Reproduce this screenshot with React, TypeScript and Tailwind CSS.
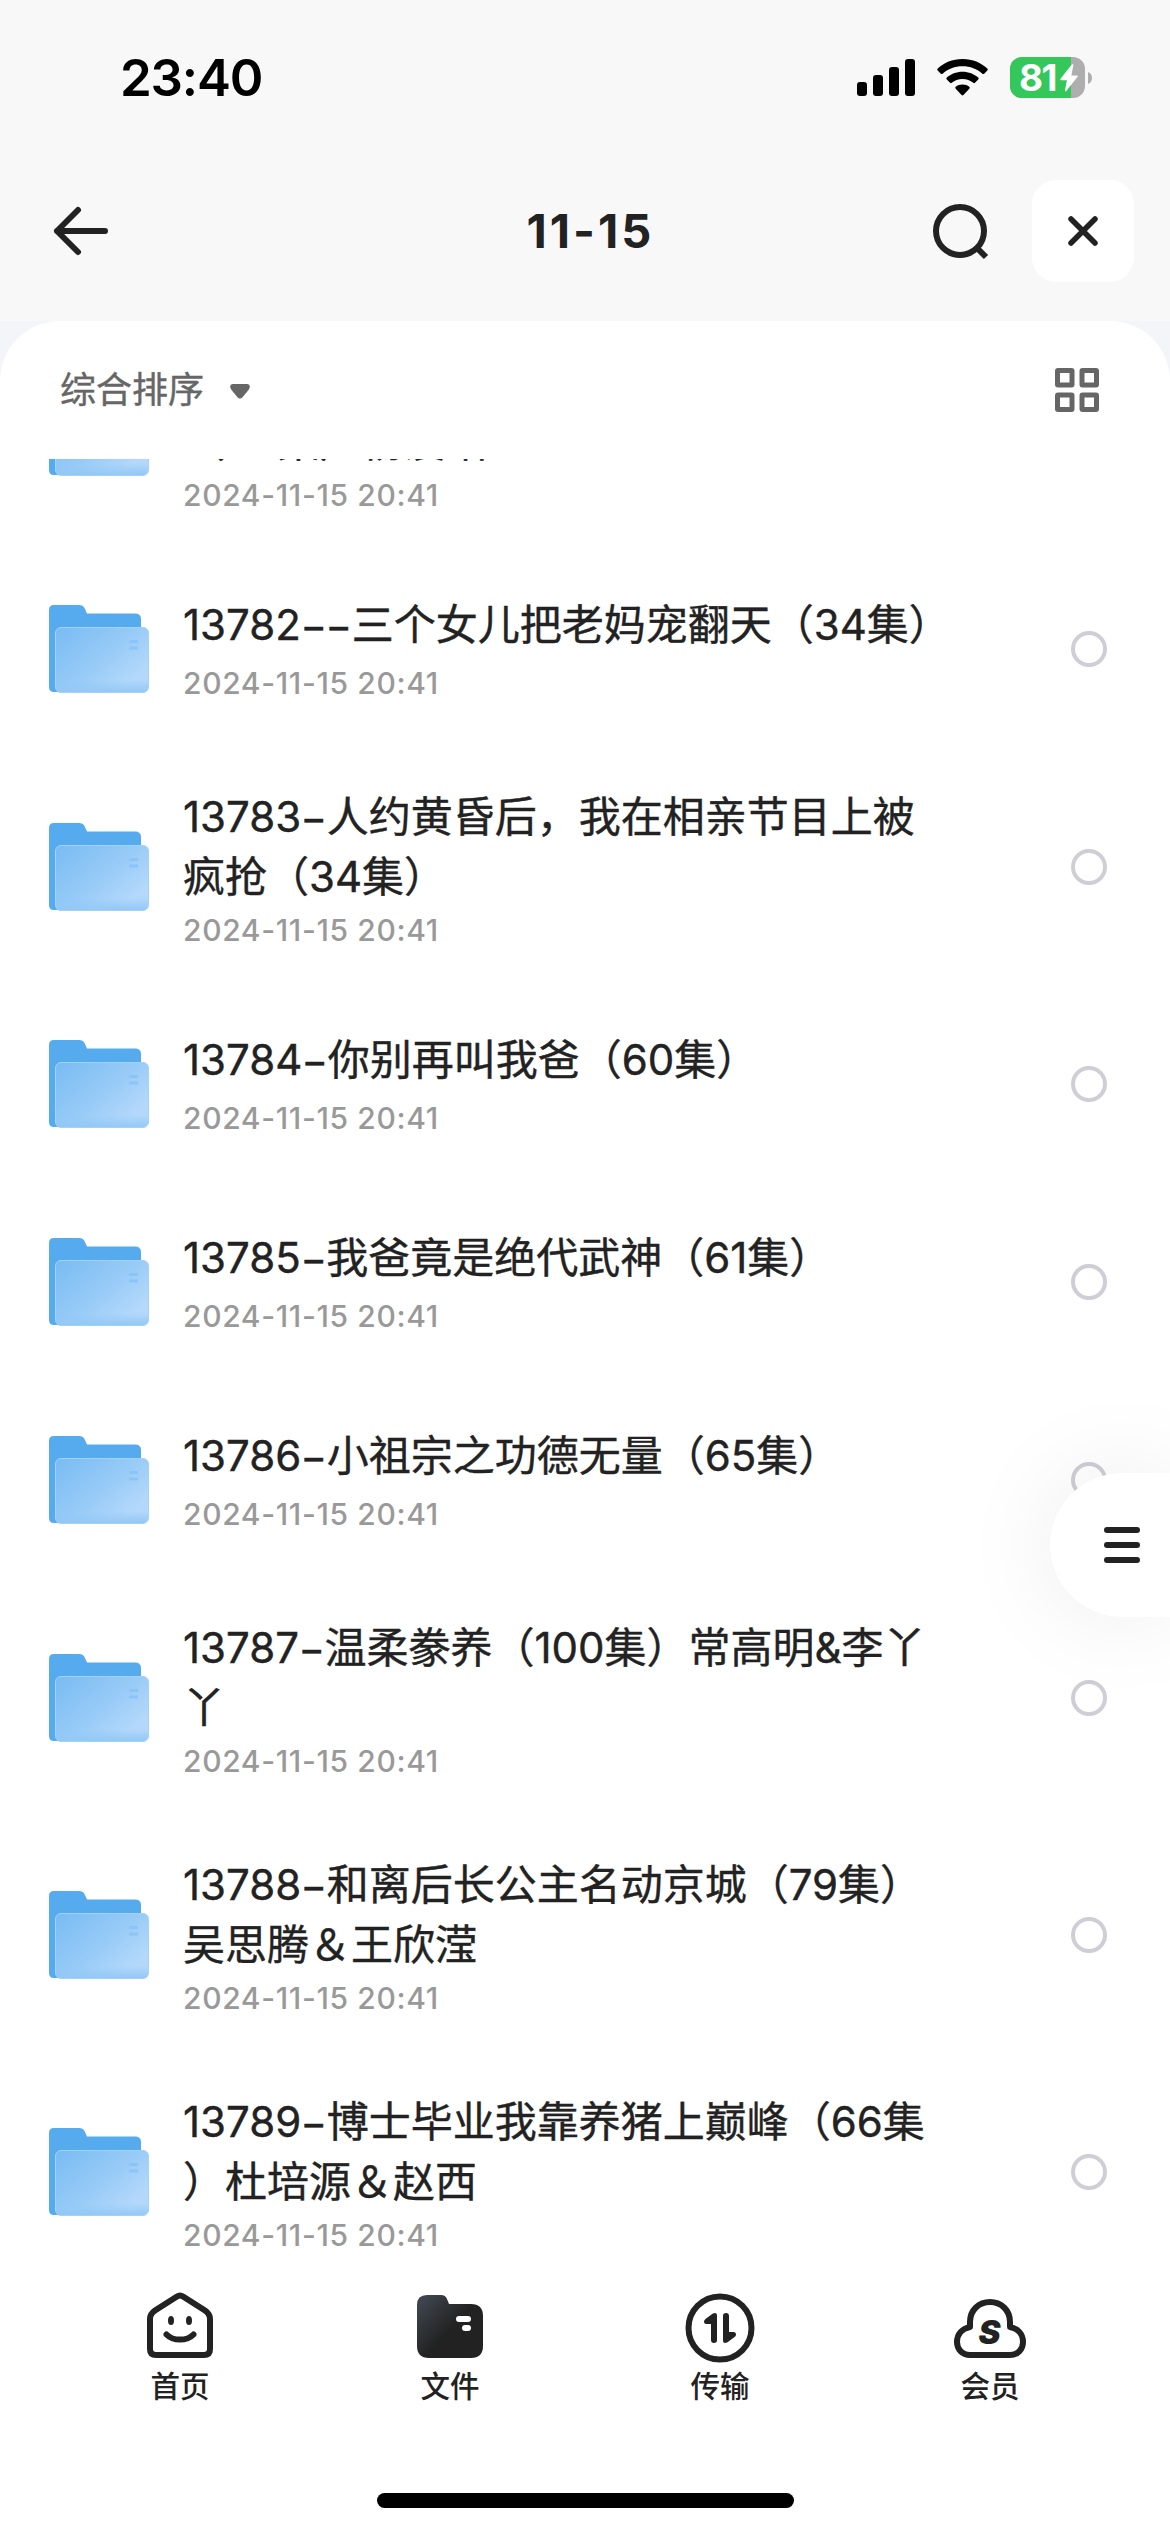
import type { ReactNode } from "react";

type FolderItem = {
  lines: string[];
  date: string;
};

const DATE = "2024-11-15 20:41";

const folders: FolderItem[] = [
  { lines: ["", "（60集）杨浚皓"], date: DATE },
  { lines: ["13782––三个女儿把老妈宠翻天（34集）"], date: DATE },
  { lines: ["13783–人约黄昏后，我在相亲节目上被", "疯抢（34集）"], date: DATE },
  { lines: ["13784–你别再叫我爸（60集）"], date: DATE },
  { lines: ["13785–我爸竟是绝代武神（61集）"], date: DATE },
  { lines: ["13786–小祖宗之功德无量（65集）"], date: DATE },
  { lines: ["13787–温柔豢养（100集）常高明&李丫", "丫"], date: DATE },
  { lines: ["13788–和离后长公主名动京城（79集）", "吴思腾＆王欣滢"], date: DATE },
  { lines: ["13789–博士毕业我靠养猪上巅峰（66集", "）杜培源＆赵西"], date: DATE },
];

function StatusBar() {
  return (
    <div className="flex h-[156px] items-start justify-between pl-[120px] pr-[78px]">
      <span className="mt-[48px] text-[51px] leading-[60px] font-semibold tracking-[-1.2px] text-black">23:40</span>
      <div className="mt-[57px] flex h-[41px] items-center">
        <svg width="58" height="37" viewBox="0 0 58 37" className="mr-[22px]">
          <rect x="0" y="23" width="10" height="14" rx="3" />
          <rect x="16" y="16" width="10" height="21" rx="3" />
          <rect x="32" y="8" width="10" height="29" rx="3" />
          <rect x="48" y="0" width="10" height="37" rx="3" />
        </svg>
        <svg width="51" height="37" viewBox="0 0 51 37" className="mr-[22px]">
          <path d="M25.500 0C35.600 0 44.300 3.800 50.300 9.600Q51.200 10.600 50.300 11.500L47.200 14.700Q46.300 15.500 45.400 14.700C40.100 9.800 33.200 7.200 25.500 7.200S10.900 9.800 5.600 14.700Q4.700 15.500 3.800 14.700L.7 11.500Q-.2 10.600.7 9.600C6.700 3.800 15.400 0 25.500 0Z" />
          <path d="M25.500 12.800C31.700 12.800 37.200 15 41.200 18.600Q42.200 19.600 41.200 20.600L38 23.800Q37.200 24.600 36.200 23.800C33.400 21.400 29.700 19.900 25.500 19.900S17.600 21.400 14.800 23.800Q13.800 24.600 13 23.800L9.800 20.600Q8.800 19.600 9.800 18.600C13.800 15 19.300 12.800 25.500 12.800Z" />
          <path d="M25.500 25.500C28.200 25.500 30.500 26.400 32.300 27.800Q33.300 28.800 32.300 29.800L26.400 36.100Q25.500 37 24.600 36.100L18.700 29.800Q17.700 28.800 18.700 27.800C20.500 26.400 22.800 25.500 25.500 25.500Z" />
        </svg>
        <div className="relative flex h-[41px] w-[75px] items-center rounded-[12px] bg-[#aeaeae]">
          <div className="absolute inset-y-0 left-0 w-[61px] rounded-l-[12px] bg-[#34c759]" />
          <span className="relative ml-[9px] text-[37px] leading-[41px] font-bold tracking-[-1.500px] text-white">81</span>
          <svg width="18" height="28" viewBox="0 0 18 28" className="absolute left-[50px] top-[7px]" fill="#fff">
            <path d="M11.800.6Q13.600-.5 13.300 1.300L11.400 11.400H16.800Q18.400 11.600 17.400 13L6.300 26.900Q4.700 28.100 5 26.200L6.900 16.200H1.300Q-.3 15.900.7 14.500Z" />
          </svg>
        </div>
        <svg width="4" height="12" viewBox="0 0 4 12" className="ml-[3px]">
          <path d="M0 0Q4 1.500 4 6T0 12Z" fill="#aeaeae" />
        </svg>
      </div>
    </div>
  );
}

function Header() {
  return (
    <header className="grid h-[165px] grid-cols-[1fr_auto_1fr] items-start">
      <svg width="56" height="50" viewBox="0 0 56 50" className="ml-[53px] mt-[50px]" fill="none" stroke="#222" strokeWidth="6" strokeLinecap="round" strokeLinejoin="round">
        <path d="M25 4L4 25L25 46M4 25H52" />
      </svg>
      <h1 className="mt-[45px] ml-[11px] text-[47px] leading-[60px] font-bold tracking-[3px] text-[#222]">11-15</h1>
      <div className="flex justify-end pr-[36px]">
        <svg width="58" height="58" viewBox="0 0 58 58" className="mr-[42px] mt-[47px]" fill="none" stroke="#222" strokeWidth="6">
          <circle cx="28" cy="28" r="24" />
          <path d="M44.500 44.500L54 54" />
        </svg>
        <button className="mt-[24px] flex h-[102px] w-[102px] items-center justify-center rounded-[24px] bg-white">
          <svg width="30" height="30" viewBox="0 0 30 30" stroke="#222" strokeWidth="5.500" strokeLinecap="round">
            <path d="M3 3L27 27M27 3L3 27" />
          </svg>
        </button>
      </div>
    </header>
  );
}

function SortBar() {
  return (
    <div className="flex h-[138px] shrink-0 items-center justify-between pl-[60px] pr-[71px]">
      <div className="flex items-center gap-[26px]">
        <span className="text-[36px] leading-[50px] text-[#666] [-webkit-text-stroke:0.4px_#666]">综合排序</span>
        <svg width="20" height="15" viewBox="0 0 20 15" className="mt-[2px]">
          <path d="M2.500 0H17.500Q20 .3 19.800 3Q19.600 4.600 18.500 6L12.300 13.600Q10 15.800 7.700 13.600L1.500 6Q.4 4.600.2 3Q0 .3 2.500 0Z" fill="#666" />
        </svg>
      </div>
      <svg width="44" height="44" viewBox="0 0 44 44" fill="none" stroke="#666" strokeWidth="5">
        <rect x="2.500" y="2.500" width="14.500" height="14.500" rx="0.500" />
        <rect x="27" y="2.500" width="14.500" height="14.500" rx="0.500" />
        <rect x="2.500" y="27" width="14.500" height="14.500" rx="0.500" />
        <rect x="27" y="27" width="14.500" height="14.500" rx="0.500" />
      </svg>
    </div>
  );
}

function FolderIcon() {
  return (
    <svg width="100" height="88" viewBox="0 0 100 88" className="shrink-0">
      <path d="M5 0H30Q34 0 35.500 3L38 8.500H86Q92 8.500 92 14V40H10V87H5Q0 87 0 82V5Q0 0 5 0Z" fill="#55abee" />
      <rect x="6.500" y="22.500" width="93" height="65" rx="5.500" fill="url(#folder-front)" stroke="#a3d2f7" />
      <rect x="7" y="75" width="92" height="12" rx="5" fill="url(#folder-edge)" />
      <rect x="80" y="35" width="9" height="3" rx="1" fill="#8bc4f6" />
      <rect x="80" y="41.500" width="9" height="3" rx="1" fill="#8bc4f6" />
    </svg>
  );
}

// Dashes get their own box so neighbouring ones don't join up.
function TitleLine({ text }: { text: string }) {
  return (
    <span className="block h-[60px]">
      {text.split(/(–)/).map((part, i) =>
        part === "–" ? (
          <span key={i} className="inline-block w-[25.500px] translate-y-[2px] scale-x-[0.88] text-center">
            –
          </span>
        ) : (
          part
        ),
      )}
    </span>
  );
}

function FolderRow({ lines, date }: FolderItem) {
  const single = lines.length === 1;
  return (
    <li className={`flex shrink-0 items-center pl-[49px] pr-[63px] ${single ? "h-[198px]" : "h-[237px]"}`}>
      <FolderIcon />
      <div className={`ml-[34px] flex-1 self-start ${single ? "pt-[45px]" : "pt-[39px]"}`}>
        <div className="text-[42px] leading-[60px] whitespace-nowrap text-[#222] [-webkit-text-stroke:0.4px_#222]">
          {lines.map((line) => (
            <TitleLine key={line} text={line} />
          ))}
        </div>
        <p className={`text-[30px] leading-[40px] font-medium tracking-[0.650px] text-[#999] ${single ? "mt-[8px]" : "mt-[3px]"}`}>{date}</p>
      </div>
      <span className="h-[36px] w-[36px] rounded-full border-4 border-[#cfced6]" />
    </li>
  );
}

function NavItem({ label, children }: { label: string; children: ReactNode }) {
  return (
    <div className="flex w-[270px] flex-col items-center">
      <svg width="80" height="75" viewBox="0 5 80 75" fill="none">
        {children}
      </svg>
      <span className="mt-px text-[29.500px] leading-[40px] font-medium text-[#222]">{label}</span>
    </div>
  );
}

function BottomNav() {
  return (
    <nav className="flex h-[242px] shrink-0 flex-col items-center justify-between bg-white pb-[24px]">
      <div className="flex">
        <NavItem label="首页">
          <path d="M37 11.500Q40 9.500 43 11.500L65 25.500Q70 29 70 34V64Q70 70 64 70H16Q10 70 10 64V34Q10 29 15 25.500Z" stroke="#222" strokeWidth="6" />
          <ellipse cx="31" cy="35.500" rx="3" ry="4.500" fill="#222" />
          <ellipse cx="49" cy="35.500" rx="3" ry="4.500" fill="#222" />
          <path d="M26.500 49.500C33 56.300 47 56.300 53.500 49.500" stroke="#222" strokeWidth="6" strokeLinecap="round" />
        </NavItem>
        <NavItem label="文件">
          <path d="M17 10H31Q35.500 10 37 14L39 19H61Q73 19 73 31V61Q73 73 61 73H19Q7 73 7 61V20Q7 10 17 10Z" fill="url(#nav-folder)" />
          <rect x="46" y="31" width="15" height="6" rx="3" fill="#fff" />
          <rect x="52" y="40" width="9" height="6" rx="3" fill="#fff" />
        </NavItem>
        <NavItem label="传输">
          <circle cx="40" cy="43" r="31.500" stroke="#222" strokeWidth="6" />
          <path d="M37 31V55Q37 58 34 58T31 55V39H26.500Q24 39 24 36.500Q24 35 25.500 34L32.500 28.800Q37 26.500 37 31Z" fill="#222" />
          <path d="M43 55V31Q43 28 46 28T49 31V47H53.500Q56 47 56 49.500Q56 51 54.500 52L47.500 57.200Q43 59.500 43 55Z" fill="#222" />
        </NavItem>
        <NavItem label="会员">
          <path d="M20 70C12 70 7 64 7 57C7 49 12.500 43.500 20 42V37C20 25 29 17 40 17S60 25 60 37V42C67.500 43.500 73 49 73 57C73 64 68 70 60 70Z" stroke="#222" strokeWidth="6" strokeLinejoin="round" />
          <text x="39.500" y="58.500" textAnchor="middle" fill="#222" fontSize="33" fontWeight="900" fontStyle="italic">S</text>
        </NavItem>
      </div>
      <div className="h-[15px] w-[417px] rounded-full bg-black" />
    </nav>
  );
}

function FloatingMenu() {
  return (
    <button className="absolute right-0 top-[1473px] flex h-[144px] w-[120px] items-center rounded-l-full bg-white pl-[54px] shadow-[0_0_100px_rgba(0,0,0,0.08)]">
      <span className="flex flex-col gap-[9px]">
        <span className="h-[6px] w-[36px] rounded-full bg-[#222]" />
        <span className="h-[6px] w-[36px] rounded-full bg-[#222]" />
        <span className="h-[6px] w-[36px] rounded-full bg-[#222]" />
      </span>
    </button>
  );
}

export default function App() {
  return (
    <div className="relative flex h-[2532px] w-[1170px] flex-col overflow-hidden bg-[#f8f8f8] font-['Inter','Noto_Sans_CJK_SC',sans-serif]">
      <svg width="0" height="0" className="absolute">
        <defs>
          <linearGradient id="folder-front" x1="0" y1="0.100" x2="1" y2="0.900">
            <stop offset="0" stopColor="#7bbdf3" />
            <stop offset="0.500" stopColor="#98cbf7" />
            <stop offset="0.850" stopColor="#b3d8fb" />
          </linearGradient>
          <linearGradient id="folder-edge" x1="0" y1="0" x2="0" y2="1">
            <stop offset="0" stopColor="#93c8f6" stopOpacity="0" />
            <stop offset="1" stopColor="#93c8f6" />
          </linearGradient>
          <linearGradient id="nav-folder" x1="0.050" y1="0.150" x2="0.500" y2="0.550">
            <stop offset="0" stopColor="#3d444c" />
            <stop offset="1" stopColor="#222" />
          </linearGradient>
        </defs>
      </svg>
      <StatusBar />
      <Header />
      <div className="flex min-h-0 flex-1 flex-col bg-[#f4f5f8]">
        <main className="flex min-h-0 flex-1 flex-col rounded-t-[60px] bg-white">
          <SortBar />
          <ul className="flex min-h-0 flex-1 flex-col justify-end overflow-hidden">
            {folders.map((item) => (
              <FolderRow key={item.lines.join("")} {...item} />
            ))}
          </ul>
          <BottomNav />
        </main>
      </div>
      <FloatingMenu />
    </div>
  );
}
